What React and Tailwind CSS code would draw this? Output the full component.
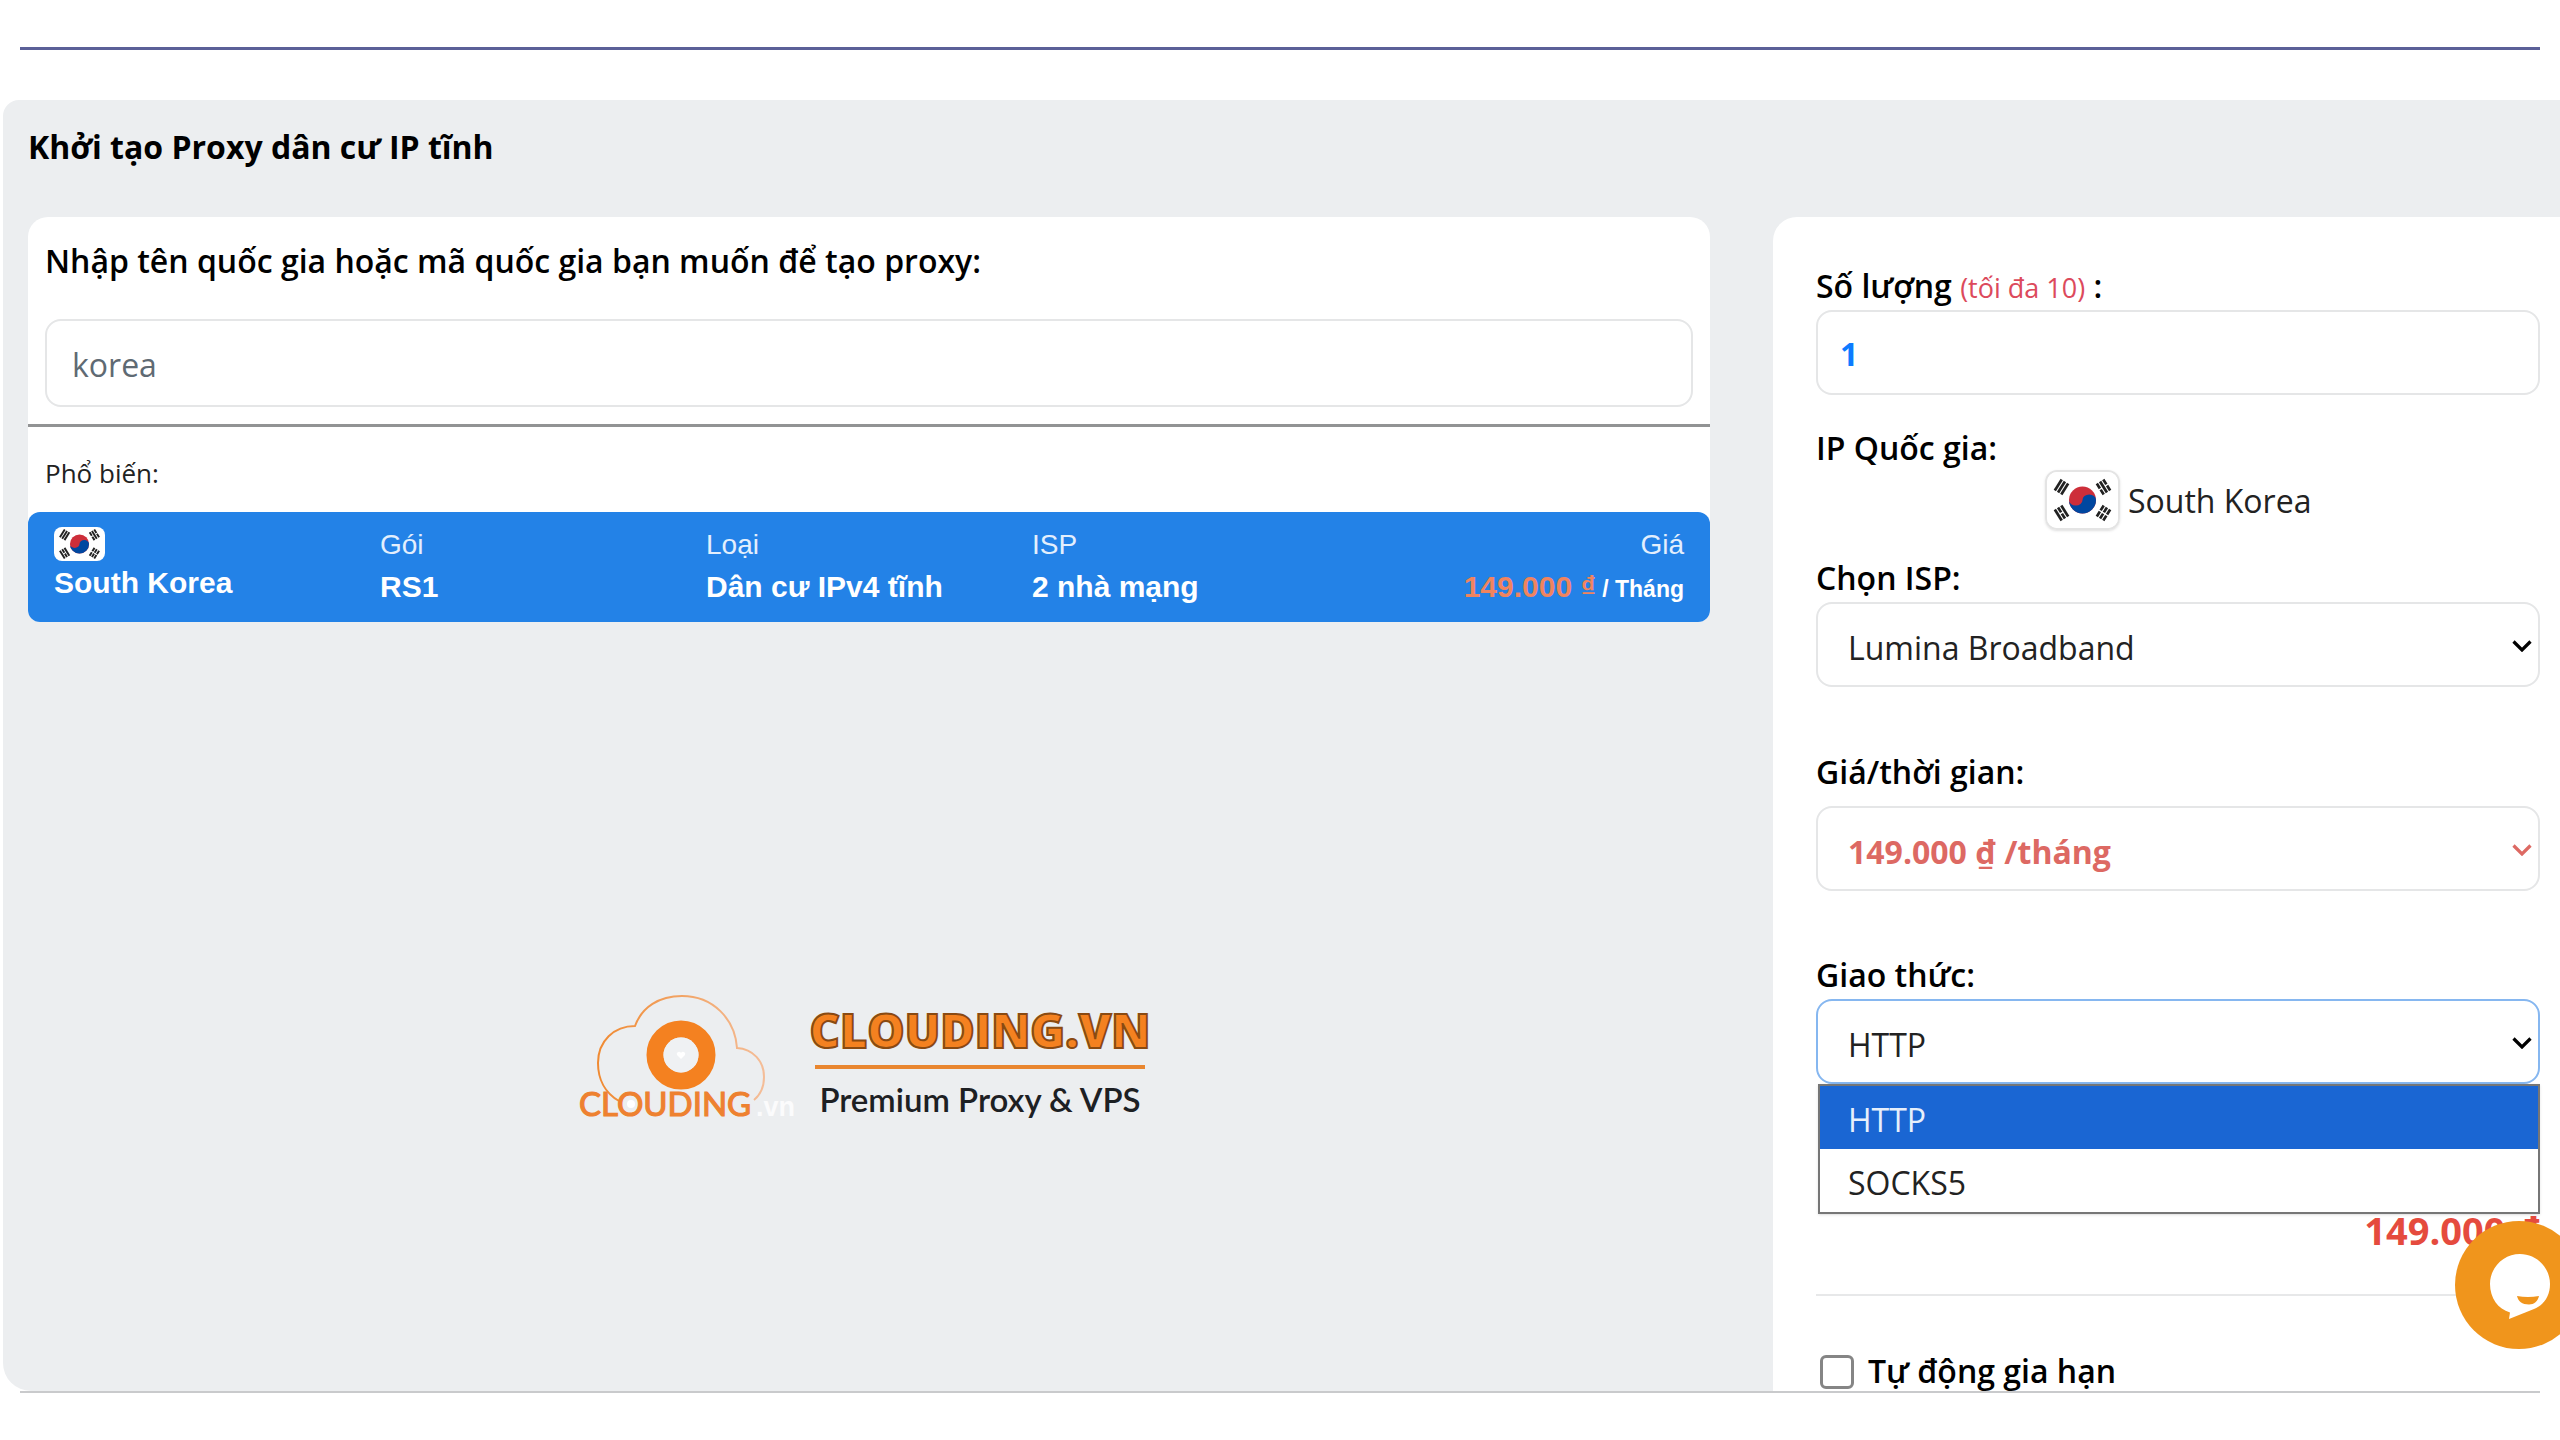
import { useState } from 'react';

const BASE_SELECT =
  'block w-full h-[85px] appearance-none rounded-2xl border-2 bg-white pt-1.5 pl-[30px] pr-14 text-[32px] leading-[44px] outline-none';

// One trigram: three slanted bars, solid or broken
function Trigram({ x, y, rotate, broken }) {
  return (
    <g transform={`translate(${x} ${y}) rotate(${rotate})`} stroke="#222" strokeWidth="2.7">
      {[-3.8, 0, 3.8].map((offset, i) => (
        <path
          key={offset}
          d={broken[i] ? `M-6.5 ${offset}H-0.7M0.7 ${offset}H6.5` : `M-6.5 ${offset}H6.5`}
        />
      ))}
    </g>
  );
}

function KoreaFlag({ className }) {
  return (
    <svg viewBox="0 0 72 56" preserveAspectRatio="xMidYMid slice" className={className} aria-label="South Korea flag">
      <rect width="72" height="56" fill="#fff" />
      <circle cx="36" cy="28" r="13.5" fill="#cd2e3a" />
      <path
        d="M22.5 28a6.75 5.5 0 0 0 13.5 0a6.75 5.5 0 0 1 13.5 0a13.5 13.5 0 0 1-27 0z"
        fill="#0047a0"
      />
      <Trigram x={15} y={15} rotate={-58} broken={[false, false, false]} />
      <Trigram x={57} y={15} rotate={58} broken={[true, false, true]} />
      <Trigram x={15} y={41} rotate={58} broken={[false, true, false]} />
      <Trigram x={57} y={41} rotate={-58} broken={[true, true, true]} />
    </svg>
  );
}

function Chevron({ className }) {
  return (
    <svg
      viewBox="0 0 20 12"
      className={`pointer-events-none absolute right-2 top-[38px] h-3 w-5 ${className}`}
      fill="none"
      stroke="currentColor"
      strokeWidth="3.2"
    >
      <path d="M1.5 1.5L10 10L18.5 1.5" />
    </svg>
  );
}

function CloudLogo() {
  return (
    <svg viewBox="0 0 222 128" className="h-32 w-[222px] shrink-0 overflow-visible" role="img" aria-label="Clouding.vn">
      <defs>
        <linearGradient id="cloud-line" x1="0" x2="1">
          <stop offset="0" stopColor="#f08a32" />
          <stop offset="1" stopColor="#f4bd98" />
        </linearGradient>
      </defs>
      <path
        d="M40 106C26 98 19 84 19 68C19 46 35 31 56 31C63 12 80 1 103 1C134 1 156 24 158 53C174 54 185 66 185 82C185 92 181 100 175 105"
        fill="none"
        stroke="url(#cloud-line)"
        strokeWidth="2"
      />
      <circle cx="102" cy="60" r="26" fill="none" stroke="#f48120" strokeWidth="17" />
      <circle cx="102" cy="60" r="17.5" fill="#eff1f3" />
      <path d="M102 64l-4-4a2 2 0 0 1 4-2a2 2 0 0 1 4 2z" fill="#fff" />
      <circle cx="52" cy="109" r="4" fill="#fff" />
      <text x="0" y="121" fill="#ee8130" stroke="#ee8130" strokeWidth="1.2" fontFamily="Lato, sans-serif" fontSize="33" fontWeight="400">
        CLOUDING
      </text>
      <text x="177" y="121" fill="#fbfbfc" fontFamily="'Liberation Sans', sans-serif" fontSize="27" fontWeight="700">
        .vn
      </text>
    </svg>
  );
}

function Brand() {
  return (
    <div className="mt-[373px] flex justify-center gap-2 pr-2">
      <CloudLogo />
      <div className="flex flex-col items-center pt-3">
        <span className="text-[47px] font-extrabold leading-[46px] text-[#f48120] [-webkit-text-stroke:2px_#8a4a12]">
          CLOUDING.VN
        </span>
        <span className="mt-3 h-1 w-[330px] bg-[#e9862f]" />
        <span className="mt-2.5 font-['Lato'] text-[33px] font-semibold leading-[40px] text-[#1d2023]">
          Premium Proxy &amp; VPS
        </span>
      </div>
    </div>
  );
}

function PackageCell({ label, children, className = '' }) {
  return (
    <div className={className}>
      <div className="text-[28px] text-[#e3effd]">{label}</div>
      <div className="mt-0.5 whitespace-nowrap font-bold">{children}</div>
    </div>
  );
}

function CountrySearch() {
  const [query, setQuery] = useState('korea');

  return (
    <section className="rounded-t-[20px] rounded-b-xl bg-white pt-[22px]">
      <div className="px-[17px]">
        <label htmlFor="country" className="block font-semibold">
          Nhập tên quốc gia hoặc mã quốc gia bạn muốn để tạo proxy:
        </label>
        <input
          id="country"
          value={query}
          onChange={(e) => setQuery(e.target.value)}
          className="mt-9 block h-[88px] w-full rounded-2xl border-2 border-[#e5e6e7] px-[25px] pt-0.5 text-[#5f6a73] outline-none"
        />
      </div>
      <hr className="mt-[17px] border-t-[3px] border-[#929394]" />
      <p className="px-[17px] pt-7 pb-[21px] text-[26px] leading-[36px] text-[#222]">Phổ biến:</p>

      <button
        type="button"
        className="grid h-[110px] w-full grid-cols-5 rounded-xl bg-[#2382e7] px-[26px] pt-[13px] text-left font-['Liberation_Sans',Arial,sans-serif] text-[30px] leading-[40px] text-white"
      >
        <div className="pt-0.5">
          <KoreaFlag className="h-[34px] w-[51px] rounded-lg" />
          <div className="mt-0.5 font-bold">South Korea</div>
        </div>
        <PackageCell label="Gói">RS1</PackageCell>
        <PackageCell label="Loại">Dân cư IPv4 tĩnh</PackageCell>
        <PackageCell label="ISP">2 nhà mạng</PackageCell>
        <PackageCell label="Giá" className="text-right">
          <span className="text-[#f0845f]">149.000 ₫</span>
          <span className="text-[23px]"> / Tháng</span>
        </PackageCell>
      </button>
    </section>
  );
}

function OrderForm() {
  const [protocol, setProtocol] = useState('HTTP');
  const protocols = ['HTTP', 'SOCKS5'];

  return (
    <form className="min-h-full rounded-tl-3xl bg-white pt-[47px] pr-5 pl-[43px]">
      <label htmlFor="quantity" className="block font-semibold">
        Số lượng <span className="text-[27px] font-normal text-[#dc4a5c]">(tối đa 10)</span> :
      </label>
      <input
        id="quantity"
        defaultValue="1"
        className="block h-[85px] w-full rounded-2xl border-2 border-[#e5e6e7] px-[22px] pt-0.5 font-bold text-[#0d7bff] outline-none"
      />

      <div className="mt-[31px] font-semibold">IP Quốc gia:</div>
      <div className="flex h-[60px] items-center gap-2 pl-[229px]">
        <KoreaFlag className="h-[60px] w-[75px] rounded-xl border-2 border-[#e4e4e4] shadow" />
        <span className="pt-0.5 text-[#222]">South Korea</span>
      </div>

      <label htmlFor="isp" className="mt-[26px] block font-semibold">Chọn ISP:</label>
      <div className="relative mt-0.5">
        <select id="isp" className={`${BASE_SELECT} border-[#e5e6e7] text-[#222]`}>
          <option>Lumina Broadband</option>
        </select>
        <Chevron className="text-black" />
      </div>

      <label htmlFor="price" className="mt-[63px] block font-semibold">Giá/thời gian:</label>
      <div className="relative mt-3">
        <select id="price" className={`${BASE_SELECT} border-[#e5e6e7] font-bold text-[#dd6963]`}>
          <option>149.000 ₫ /tháng</option>
        </select>
        <Chevron className="text-[#dd6963]" />
      </div>

      <label htmlFor="protocol" className="mt-[62px] block font-semibold">Giao thức:</label>
      <div className="relative mt-0.5">
        <select
          id="protocol"
          value={protocol}
          onChange={(e) => setProtocol(e.target.value)}
          className={`${BASE_SELECT} border-[#86b7f0] text-[#222]`}
        >
          {protocols.map((name) => (
            <option key={name}>{name}</option>
          ))}
        </select>
        <Chevron className="text-black" />
        <ul role="listbox" className="absolute left-0.5 right-0 top-full z-10 border-2 border-[#767676] bg-white shadow">
          {protocols.map((name) => (
            <li
              key={name}
              role="option"
              aria-selected={name === protocol}
              onClick={() => setProtocol(name)}
              className={`h-[63px] pt-3 pl-7 ${name === protocol ? 'bg-[#1a66d3] text-[#e6effb]' : 'text-[#222]'}`}
            >
              {name}
            </li>
          ))}
        </ul>
      </div>

      <div className="mt-[118px] text-right text-[38px] font-bold leading-[56px] text-[#e54b3e]">149.000 ₫</div>
      <hr className="mt-9 border-t-2 border-[#e7e8e9]" />

      <label className="mt-[53px] flex items-start gap-3.5 pl-1 font-semibold">
        <input
          type="checkbox"
          className="mt-1.5 size-[34px] appearance-none rounded-md border-[3px] border-[#858585] bg-white checked:bg-[#1a66d3]"
        />
        Tự động gia hạn
      </label>
    </form>
  );
}

function ChatButton() {
  return (
    <button
      type="button"
      aria-label="Chat"
      className="absolute right-[-23px] bottom-[91px] z-20 size-32 rounded-full bg-[#f0951c]"
    >
      <svg viewBox="0 0 128 128" className="size-full">
        <path
          d="M65 33C81 33 95 46 95 63C95 75 89 84 79 88L54 98L55 91.500C43 88 35 77 35 63C35 46 49 33 65 33Z"
          fill="#fff"
        />
        <path d="M62 75Q73 77 84 75C83 80 79 83.500 74 83.500C67 83.500 63 80 62 75Z" fill="#f0951c" />
      </svg>
    </button>
  );
}

export default function App() {
  return (
    <div className="relative flex h-screen flex-col overflow-hidden bg-white pb-[47px] font-['Open_Sans','Noto_Sans',sans-serif] text-[32px] leading-[44px] text-black">
      <div className="mx-5 mt-[47px] mb-[50px] h-[3px] shrink-0 bg-[#5b6098]" />

      <main className="ml-[3px] flex min-h-0 flex-1 flex-col overflow-hidden rounded-tl-2xl rounded-bl-[28px] bg-[#eceef0] pt-[25px] pl-[25px]">
        <h1 className="font-bold">Khởi tạo Proxy dân cư IP tĩnh</h1>
        <div className="mt-12 grid min-h-0 flex-1 grid-cols-[1682fr_787fr] gap-[63px]">
          <div>
            <CountrySearch />
            <Brand />
          </div>
          <OrderForm />
        </div>
      </main>
      <div className="mx-5 h-0.5 shrink-0 bg-[#c9cacc]" />

      <ChatButton />
    </div>
  );
}
